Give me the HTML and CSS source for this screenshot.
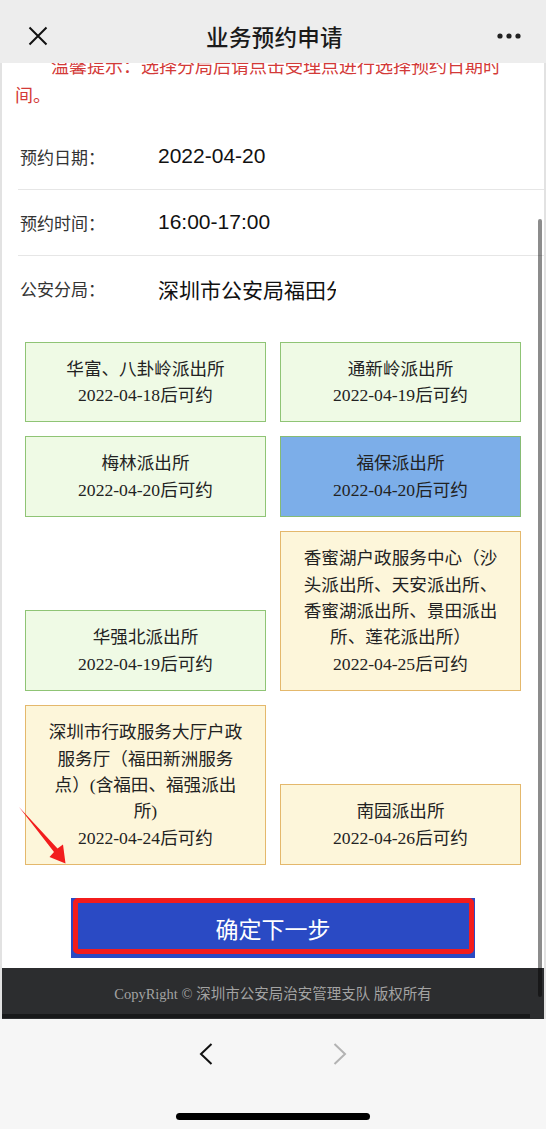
FILE: index.html
```html
<!DOCTYPE html>
<html lang="zh-CN">

<head>
    <meta charset="UTF-8">
    <meta name="viewport" content="width=device-width, initial-scale=1.0">
    <title>业务预约申请</title>
    <link rel="stylesheet" href="styles.css">
</head>

<body>
    <div class="topbar">
        <svg class="close-icon" width="20" height="20" viewBox="0 0 20 20">
            <path d="M1.5 1.5 L18.5 18.5 M18.5 1.5 L1.5 18.5" stroke="#111" stroke-width="2" fill="none" />
        </svg>
        <div class="title">业务预约申请</div>
        <svg class="more-icon" width="24" height="6" viewBox="0 0 24 6">
            <circle cx="3" cy="3" r="2.6" fill="#222" />
            <circle cx="12" cy="3" r="2.6" fill="#222" />
            <circle cx="21" cy="3" r="2.6" fill="#222" />
        </svg>
    </div>

    <div class="page">
        <p class="notice">温馨提示：选择分局后请点击受理点进行选择预约日期时间。</p>

        <div class="form">
            <div class="form-row">
                <span class="label">预约日期：</span>
                <span class="value">2022-04-20</span>
            </div>
            <div class="form-row">
                <span class="label">预约时间：</span>
                <span class="value">16:00-17:00</span>
            </div>
            <div class="form-row">
                <span class="label">公安分局：</span>
                <span class="value">深圳市公安局福田分局</span>
            </div>
        </div>

        <!-- 受理点 -->
        <div class="stations">
            <div class="station free">
                <div>华富、八卦岭派出所</div>
                <div>2022-04-18后可约</div>
            </div>
            <div class="station free">
                <div>通新岭派出所</div>
                <div>2022-04-19后可约</div>
            </div>
            <div class="station free">
                <div>梅林派出所</div>
                <div>2022-04-20后可约</div>
            </div>
            <div class="station selected">
                <div>福保派出所</div>
                <div>2022-04-20后可约</div>
            </div>
            <div class="station free">
                <div>华强北派出所</div>
                <div>2022-04-19后可约</div>
            </div>
            <div class="station busy">
                <div>香蜜湖户政服务中心（沙头派出所、天安派出所、香蜜湖派出所、景田派出所、莲花派出所）</div>
                <div>2022-04-25后可约</div>
            </div>
            <div class="station busy">
                <div>深圳市行政服务大厅户政服务厅（福田新洲服务点）(含福田、福强派出所)</div>
                <div>2022-04-24后可约</div>
            </div>
            <div class="station busy">
                <div>南园派出所</div>
                <div>2022-04-26后可约</div>
            </div>
        </div>

        <div class="btn-wrap">
            <button class="next-btn">确定下一步</button>
        </div>

        <div class="footer">
            <div class="copyright">CopyRight © 深圳市公安局治安管理支队 版权所有</div>
            <div class="hbar"></div>
        </div>

        <div class="scrollbar"></div>
        <svg class="arrow" width="70" height="70" viewBox="10 800 70 70">
            <polygon points="19,807 57.5,848.5 63,844.5 65.5,863.5 49.5,857 54,852" fill="#f21d1d" />
        </svg>
    </div>

    <div class="navbar">
        <div class="nav-arrows">
            <svg width="14" height="22" viewBox="0 0 14 22">
                <path d="M12.5 1 L2 11 L12.5 21" stroke="#111" stroke-width="2" fill="none" />
            </svg>
            <svg width="14" height="22" viewBox="0 0 14 22">
                <path d="M1.5 1 L12 11 L1.5 21" stroke="#b3b3b3" stroke-width="2" fill="none" />
            </svg>
        </div>
        <div class="home-indicator"></div>
    </div>
</body>

</html>
```

FILE: styles.css
```css
* {
    margin: 0;
    padding: 0;
    box-sizing: border-box;
}

html,
body {
    width: 546px;
    height: 1129px;
    overflow: hidden;
}

body {
    background: #fff;
    font-family: "Noto Sans CJK SC", sans-serif;
    color: #222;
}

.topbar {
    position: relative;
    z-index: 2;
    height: 63px;
    padding: 8px 25px 0 28px;
    background: #ededed;
    display: grid;
    grid-template-columns: 1fr auto 1fr;
    align-items: center;
}

.close-icon {
    justify-self: start;
}

.more-icon {
    justify-self: end;
}

.title {
    font-size: 22.5px;
    font-weight: 500;
    color: #1a1a1a;
    letter-spacing: 0.3px;
}

.page {
    display: flow-root;
    position: relative;
    border-left: 2px solid #e2e2e2;
    border-right: 2px solid #e2e2e2;
}

/* first line sits partly under the top bar */
.notice {
    margin-top: -12px;
    padding: 0 34px 0 13px;
    text-indent: 2em;
    font-size: 18px;
    line-height: 28.8px;
    color: #d33a38;
}

.form {
    margin-top: 15px;
}

.form-row {
    display: flex;
    align-items: center;
    height: 66px;
    margin-left: 16px;
    border-bottom: 1px solid #e6e6e6;
}

.form-row:last-child {
    border-bottom: none;
}

.label {
    width: 140px;
    padding-left: 2px;
    font-size: 17px;
    color: #333;
}

.value {
    width: 178px;
    overflow: hidden;
    white-space: nowrap;
    font-family: "Liberation Sans", "Noto Sans CJK SC", sans-serif;
    font-size: 21px;
    color: #111;
}

.stations {
    margin: 20px 23px 0;
    display: grid;
    grid-template-columns: 241px 241px;
    gap: 14px;
    align-items: end;
}

.station {
    border: 1px solid;
    padding: 13px 21px;
    text-align: center;
    font-family: "Liberation Serif", "Noto Sans CJK SC", serif;
    font-size: 17.6px;
    line-height: 26.4px;
    color: #222;
}

.free {
    background: #effae5;
    border-color: #8fc475;
}

.selected {
    background: #7caee9;
    border-color: #86bb74;
}

.busy {
    background: #fdf6da;
    border-color: #e4b86c;
}

.btn-wrap {
    margin-top: 33px;
    text-align: center;
}

.next-btn {
    position: relative;
    width: 404px;
    height: 60px;
    border: none;
    background: #2a4ac4;
    color: #fff;
    font-family: "Noto Sans CJK SC", sans-serif;
    font-size: 23px;
}

/* red annotation frame */
.next-btn::after {
    content: "";
    position: absolute;
    top: 0;
    left: 2px;
    right: 1px;
    bottom: 4px;
    border: 5px solid #f31c1c;
    border-radius: 5px;
}

.footer {
    margin-top: 10px;
    padding-top: 6px;
    height: 51px;
    background: #2c2d2f;
}

.copyright {
    height: 40px;
    line-height: 40px;
    text-align: center;
    font-family: "Liberation Serif", "Noto Sans CJK SC", serif;
    font-size: 14.5px;
    color: #a3a3a3;
}

.hbar {
    height: 4px;
    margin-right: 14px;
    background: #18191a;
}

.scrollbar {
    position: absolute;
    left: 536px;
    top: 156px;
    width: 4px;
    height: 778px;
    border-radius: 2px;
    background: rgba(0, 0, 0, 0.45);
}

.arrow {
    position: absolute;
    left: 8px;
    top: 737px;
}

.navbar {
    height: 111px;
    padding-top: 24px;
    background: #f6f6f6;
}

.nav-arrows {
    display: flex;
    justify-content: center;
    gap: 120px;
}

.home-indicator {
    width: 194px;
    height: 7px;
    margin: 48px auto 0;
    border-radius: 4px;
    background: #000;
}
```
